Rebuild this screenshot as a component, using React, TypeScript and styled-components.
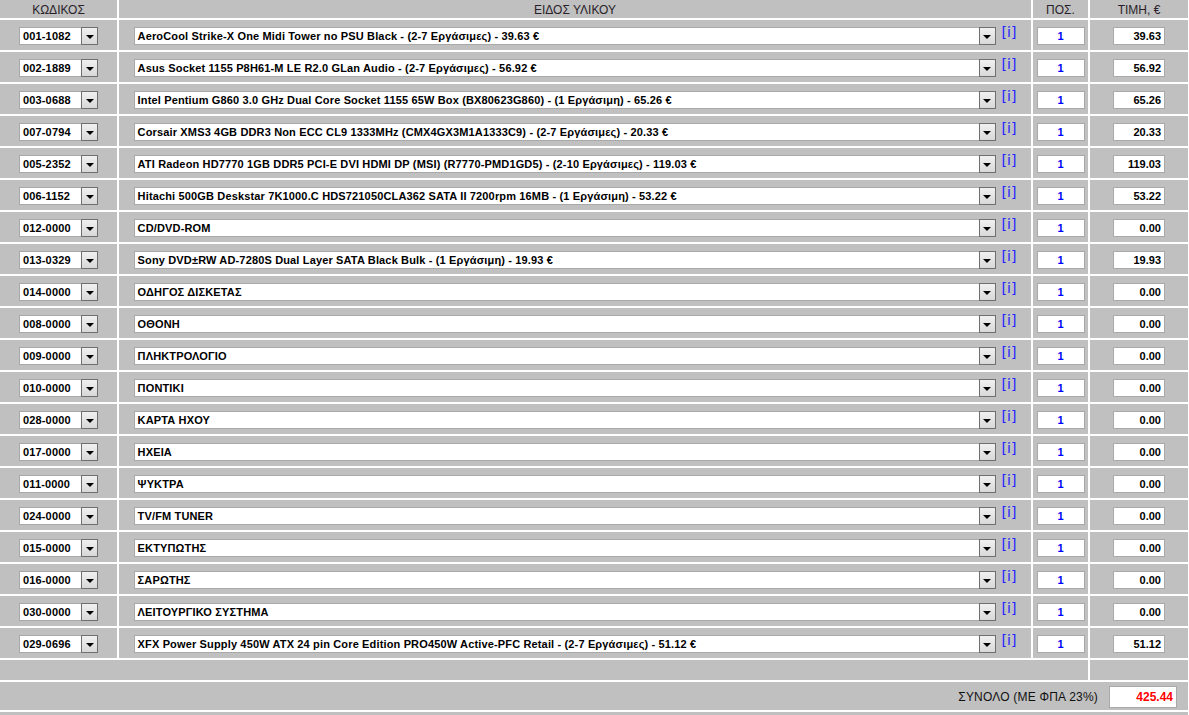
import React from "react";
import styled, { createGlobalStyle } from "styled-components";

const Global = createGlobalStyle`
  html, body { margin: 0; padding: 0; background: #ffffff; }
  body { font-family: "Liberation Sans", Arial, sans-serif; }
`;

const Table = styled.div<{ $rows: number }>`
  display: grid;
  grid-template-columns: 117px 912px 55px 98px;
  grid-template-rows: 18px repeat(${(p) => p.$rows}, 30px) 20px 28px;
  gap: 2px;
  width: 1188px;
  background: #ffffff;
  padding-bottom: 2px;
`;

const Footer = styled.div`
  width: 1188px;
  height: 20px;
  background: #c0c0c0;
`;

const HeadCell = styled.div`
  background: #c0c0c0;
  display: flex;
  align-items: center;
  justify-content: center;
  font-size: 12px;
  color: #2a1f2a;
  padding-top: 1px;
  box-sizing: border-box;
`;

const Cell = styled.div`
  background: #c0c0c0;
  display: flex;
  align-items: flex-start;
  justify-content: center;
  padding-top: 7px;
  box-sizing: border-box;
`;

const EmptyCell = styled.div<{ $span?: number }>`
  background: #c0c0c0;
  grid-column: span ${(p) => p.$span || 1};
`;

const TotalRow = styled.div`
  grid-column: 1 / -1;
  background: #c0c0c0;
  display: flex;
  align-items: center;
  justify-content: flex-end;
  gap: 11px;
  padding-right: 11px;
  padding-top: 1px;
  box-sizing: border-box;
`;

const TotalLabel = styled.span`
  font-size: 12px;
  color: #111;
  letter-spacing: 0.2px;
`;

const SelectBox = styled.div<{ $width: number }>`
  width: ${(p) => p.$width}px;
  height: 18px;
  box-sizing: border-box;
  background: #ffffff;
  border: 1px solid #a9a9a9;
  border-right: none;
  display: flex;
  align-items: stretch;
`;

const SelectText = styled.div`
  flex: 1;
  font-size: 11px;
  font-weight: bold;
  color: #000;
  line-height: 16px;
  padding-left: 3px;
  letter-spacing: 0.15px;
  white-space: nowrap;
  overflow: hidden;
`;

const ArrowBtn = styled.div`
  width: 17px;
  height: 18px;
  margin-top: -1px;
  box-sizing: border-box;
  border: 1px solid #6f6f6f;
  background: linear-gradient(#f0f0f0, #d8d8d8);
  display: flex;
  align-items: center;
  justify-content: center;
  padding-top: 2px;
`;

const Arrow = styled.div`
  width: 0;
  height: 0;
  border-left: 4px solid transparent;
  border-right: 4px solid transparent;
  border-top: 4px solid #000;
`;

const InfoLink = styled.a`
  font-family: "DejaVu Sans", Verdana, sans-serif;
  font-size: 14px;
  color: #1f1fff;
  text-decoration: none;
  margin-left: 6px;
  margin-top: -2px;
  line-height: 15px;
`;

const TextBox = styled.div<{ $width: number; $align: string; $color: string; $height?: number; $size?: number }>`
  width: ${(p) => p.$width}px;
  height: ${(p) => p.$height || 18}px;
  box-sizing: border-box;
  background: #fff;
  border: 1px solid #a9a9a9;
  font-size: ${(p) => p.$size || 11}px;
  font-weight: bold;
  color: ${(p) => p.$color};
  text-align: ${(p) => p.$align};
  line-height: ${(p) => (p.$height || 18) - 2}px;
  padding: 0 3px;
`;

const Select = ({ width, text }: { width: number; text: string }) => (
  <SelectBox $width={width}>
    <SelectText>{text}</SelectText>
    <ArrowBtn>
      <Arrow />
    </ArrowBtn>
  </SelectBox>
);

const rows: [string, string, string][] = [
  ["001-1082", "AeroCool Strike-X One Midi Tower no PSU Black - (2-7 Εργάσιμες) - 39.63 €", "39.63"],
  ["002-1889", "Asus Socket 1155 P8H61-M LE R2.0 GLan Audio - (2-7 Εργάσιμες) - 56.92 €", "56.92"],
  ["003-0688", "Intel Pentium G860 3.0 GHz Dual Core Socket 1155 65W Box (BX80623G860) - (1 Εργάσιμη) - 65.26 €", "65.26"],
  ["007-0794", "Corsair XMS3 4GB DDR3 Non ECC CL9 1333MHz (CMX4GX3M1A1333C9) - (2-7 Εργάσιμες) - 20.33 €", "20.33"],
  ["005-2352", "ATI Radeon HD7770 1GB DDR5 PCI-E DVI HDMI DP (MSI) (R7770-PMD1GD5) - (2-10 Εργάσιμες) - 119.03 €", "119.03"],
  ["006-1152", "Hitachi 500GB Deskstar 7K1000.C HDS721050CLA362 SATA II 7200rpm 16MB - (1 Εργάσιμη) - 53.22 €", "53.22"],
  ["012-0000", "CD/DVD-ROM", "0.00"],
  ["013-0329", "Sony DVD±RW AD-7280S Dual Layer SATA Black Bulk - (1 Εργάσιμη) - 19.93 €", "19.93"],
  ["014-0000", "ΟΔΗΓΟΣ ΔΙΣΚΕΤΑΣ", "0.00"],
  ["008-0000", "ΟΘΟΝΗ", "0.00"],
  ["009-0000", "ΠΛΗΚΤΡΟΛΟΓΙΟ", "0.00"],
  ["010-0000", "ΠΟΝΤΙΚΙ", "0.00"],
  ["028-0000", "ΚΑΡΤΑ ΗΧΟΥ", "0.00"],
  ["017-0000", "ΗΧΕΙΑ", "0.00"],
  ["011-0000", "ΨΥΚΤΡΑ", "0.00"],
  ["024-0000", "TV/FM TUNER", "0.00"],
  ["015-0000", "ΕΚΤΥΠΩΤΗΣ", "0.00"],
  ["016-0000", "ΣΑΡΩΤΗΣ", "0.00"],
  ["030-0000", "ΛΕΙΤΟΥΡΓΙΚΟ ΣΥΣΤΗΜΑ", "0.00"],
  ["029-0696", "XFX Power Supply 450W ATX 24 pin Core Edition PRO450W Active-PFC Retail - (2-7 Εργάσιμες) - 51.12 €", "51.12"],
];

export default function App() {
  return (
    <>
      <Global />
      <Table $rows={rows.length}>
        <HeadCell>ΚΩΔΙΚΟΣ</HeadCell>
        <HeadCell>ΕΙΔΟΣ ΥΛΙΚΟΥ</HeadCell>
        <HeadCell>ΠΟΣ.</HeadCell>
        <HeadCell>ΤΙΜΗ, €</HeadCell>
        {rows.map(([code, name, price]) => (
          <React.Fragment key={code}>
            <Cell>
              <Select width={79} text={code} />
            </Cell>
            <Cell>
              <Select width={862} text={name} />
              <InfoLink href="#">[i]</InfoLink>
            </Cell>
            <Cell>
              <TextBox $width={48} $align="center" $color="#0000ff">1</TextBox>
            </Cell>
            <Cell>
              <TextBox $width={52} $align="right" $color="#000">{price}</TextBox>
            </Cell>
          </React.Fragment>
        ))}
        <EmptyCell $span={3} />
        <EmptyCell />
        <TotalRow>
          <TotalLabel>ΣΥΝΟΛΟ (ΜΕ ΦΠΑ 23%)</TotalLabel>
          <TextBox $width={68} $height={22} $size={12} $align="right" $color="#ff0000">425.44</TextBox>
        </TotalRow>
      </Table>
      <Footer />
    </>
  );
}
